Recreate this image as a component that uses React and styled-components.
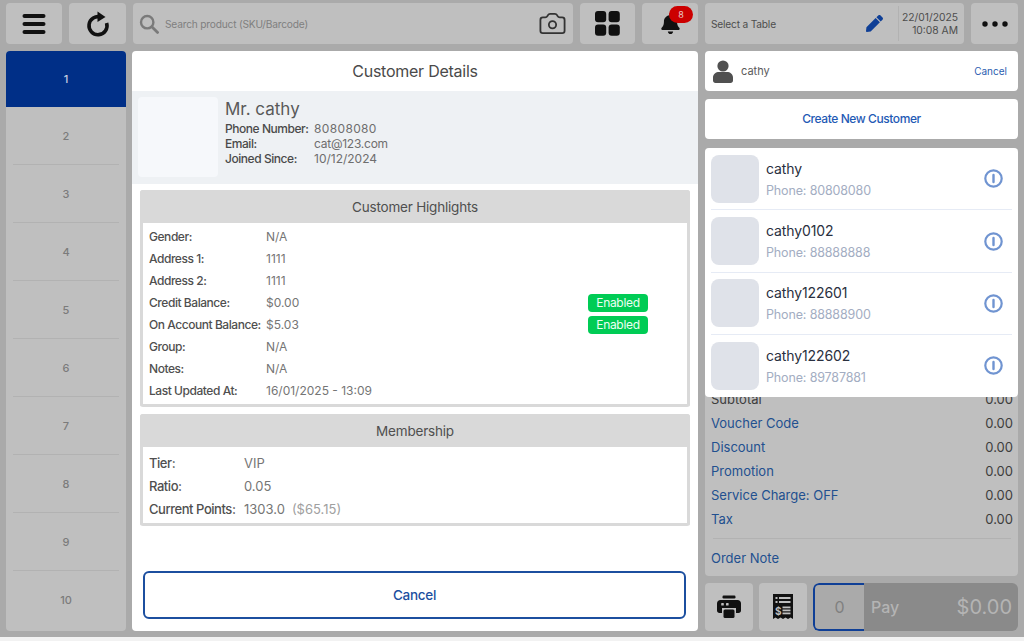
import React from 'react';
import styled, { createGlobalStyle } from 'styled-components';
import { Camera } from 'lucide-react';
import { FaBell, FaPen } from 'react-icons/fa';

const GlobalStyle = createGlobalStyle`
  html, body { margin: 0; padding: 0; height: 100%; overflow: hidden; }
  body { background: #f2f2f2; font-family: Inter, "Liberation Sans", sans-serif; }
  * { box-sizing: border-box; }
`;

const Page = styled.div`
  width: 1024px;
  height: 637px;
  background: #aaaaaa;
  padding: 3px 6px 6px;
  display: flex;
  flex-direction: column;
  gap: 7px;
`;

const TopBar = styled.div`
  display: flex;
  gap: 7px;
  height: 41px;
  flex: none;
`;

const TopButton = styled.div`
  width: ${(p) => p.$w}px;
  flex: none;
  background: #bfbfbf;
  border-radius: 4px;
  display: flex;
  align-items: center;
  justify-content: center;
  position: relative;
  color: #111;
`;

const SearchBar = styled.div`
  width: 440px;
  flex: none;
  background: #bfbfbf;
  border-radius: 4px;
  display: flex;
  align-items: center;
  padding: 0 6px 0 6px;
  gap: 6px;
`;

const SearchText = styled.div`
  flex: 1;
  font-size: 10.2px;
  letter-spacing: -0.2px;
  color: #808080;
`;

const Badge = styled.div`
  position: absolute;
  top: 3px;
  left: 27px;
  width: 24px;
  height: 17px;
  border-radius: 9px;
  background: #cc0000;
  color: #e8c9c9;
  font-size: 9px;
  display: flex;
  align-items: center;
  justify-content: center;
`;

const TablePicker = styled.div`
  width: 259px;
  flex: none;
  background: #bfbfbf;
  border-radius: 4px;
  display: flex;
  align-items: center;
  padding-left: 6px;
  color: #4d4d4d;
`;

const TableLabel = styled.div`
  flex: 1;
  font-size: 10.2px;
  letter-spacing: -0.2px;
`;

const EditIcon = styled(FaPen)`
  color: #0f3f96;
  font-size: 17px;
  margin-right: 15px;
`;

const DateBox = styled.div`
  height: 35px;
  width: 66px;
  padding-right: 6px;
  border-left: 1px solid #b2b2b2;
  text-align: right;
  font-size: 10.3px;
  line-height: 13px;
  display: flex;
  flex-direction: column;
  justify-content: center;
`;

const Body = styled.div`
  flex: 1;
  min-height: 0;
  display: flex;
  gap: 6px;
`;

const SideList = styled.div`
  width: 120px;
  flex: none;
  background: #bfbfbf;
  border-radius: 4px;
  overflow: hidden;
  display: flex;
  flex-direction: column;
`;

const SideItem = styled.div`
  height: ${(p) => (p.$active ? 56 : 58)}px;
  flex: none;
  display: flex;
  align-items: center;
  justify-content: center;
  font-size: 11px;
  font-weight: 500;
  color: ${(p) => (p.$active ? '#c3cfe0' : '#7b7b7b')};
  background: ${(p) => (p.$active ? '#002f87' : 'transparent')};
  position: relative;
  &::after {
    content: '';
    display: ${(p) => (p.$active || p.$last ? 'none' : 'block')};
    position: absolute;
    left: 7px;
    right: 7px;
    bottom: 0;
    height: 1px;
    background: #b2b2b2;
  }
`;

const Main = styled.div`
  width: 566px;
  flex: none;
  background: #fff;
  border-radius: 4px;
  display: flex;
  flex-direction: column;
  overflow: hidden;
  margin-right: 1px;
`;

const MainTitle = styled.div`
  height: 40px;
  flex: none;
  display: flex;
  align-items: center;
  justify-content: center;
  font-size: 16px;
  letter-spacing: -0.25px;
  color: #4a4a4a;
`;

const ProfileBand = styled.div`
  height: 93px;
  flex: none;
  background: #eef1f4;
  padding: 6px;
  display: flex;
  gap: 7px;
`;

const ProfilePhoto = styled.div`
  width: 80px;
  height: 80px;
  background: #f6f8fb;
  border-radius: 4px;
  flex: none;
`;

const ProfileInfo = styled.div`
  display: flex;
  flex-direction: column;
`;

const ProfileName = styled.div`
  font-size: 17px;
  line-height: 22px;
  color: #595959;
  margin-top: 1px;
  margin-bottom: 1px;
`;

const ProfileRow = styled.div`
  display: flex;
  height: 15px;
  align-items: center;
  font-size: 12px;
`;

const ProfileKey = styled.div`
  width: 89px;
  font-weight: 500;
  letter-spacing: -0.45px;
  color: #4a4a4a;
`;

const ProfileValue = styled.div`
  color: #6e6e6e;
  letter-spacing: ${(p) => p.$track || 0}px;
`;

const Sections = styled.div`
  flex: 1;
  padding: 6px 8px 0;
  display: flex;
  flex-direction: column;
  gap: 7px;
`;

const Section = styled.div`
  background: #fff;
  border: 3px solid #d9d9d9;
  border-top: 0;
  border-radius: 3px;
`;

const SectionHead = styled.div`
  height: 33px;
  margin: 0 -3px;
  background: #d9d9d9;
  border-radius: 3px 3px 0 0;
  display: flex;
  align-items: center;
  justify-content: center;
  font-size: 13.5px;
  letter-spacing: -0.2px;
  color: #4f4f4f;
`;

const SectionBody = styled.div`
  padding: ${(p) => p.$pad};
`;

const Row = styled.div`
  height: ${(p) => p.$h}px;
  display: flex;
  align-items: center;
  position: relative;
  font-size: ${(p) => p.$size}px;
`;

const Key = styled.div`
  width: ${(p) => p.$w}px;
  flex: none;
  font-weight: 500;
  letter-spacing: -0.45px;
  color: #4f4f4f;
`;

const Value = styled.div`
  color: #757575;
`;

const Muted = styled.span`
  color: #a0a0a0;
  margin-left: 7px;
`;

const EnabledTag = styled.div`
  position: absolute;
  right: 33px;
  top: 2px;
  width: 60px;
  height: 18px;
  background: #00cc55;
  border-radius: 4px;
  color: #ecfff3;
  font-size: 12px;
  letter-spacing: -0.3px;
  display: flex;
  align-items: center;
  justify-content: center;
`;

const CancelWrap = styled.div`
  padding: 0 12px 12px 11px;
  flex: none;
`;

const CancelButton = styled.div`
  height: 48px;
  border: 2px solid #1c4f9f;
  border-radius: 6px;
  display: flex;
  align-items: center;
  justify-content: center;
  color: #1c4f9f;
  font-size: 13.5px;
  font-weight: 500;
  letter-spacing: -0.3px;
`;

const RightCol = styled.div`
  width: 313px;
  flex: none;
  display: flex;
  flex-direction: column;
  gap: 8px;
`;

const WhiteCard = styled.div`
  height: 40px;
  flex: none;
  background: #fff;
  border-radius: 4px;
  display: flex;
  align-items: center;
  padding: 0 11px 0 8px;
  font-size: 11px;
  color: #5a5a5a;
`;

const CustomerName = styled.div`
  flex: 1;
  margin-left: 8px;
`;

const CancelLink = styled.div`
  color: #2a5db0;
  font-size: 10px;
`;

const CreateButton = styled(WhiteCard)`
  justify-content: center;
  padding: 0 0 2px;
  color: #1f5ab5;
  font-size: 12px;
  font-weight: 500;
  letter-spacing: -0.42px;
`;

const OrderArea = styled.div`
  flex: 1;
  min-height: 0;
  position: relative;
  display: flex;
  flex-direction: column;
  gap: 7px;
  margin-top: 1px;
`;

const Totals = styled.div`
  flex: 1;
  min-height: 0;
  background: #bfbfbf;
  border-radius: 4px;
  padding: 0 5px 6px 6px;
  display: flex;
  flex-direction: column;
  justify-content: flex-end;
`;

const TotalRow = styled.div`
  height: 24px;
  flex: none;
  display: flex;
  align-items: center;
  justify-content: space-between;
  font-size: 13px;
  color: ${(p) => (p.$link ? '#22508f' : '#3d3d3d')};
`;

const TotalAmount = styled.span`
  color: #3d3d3d;
`;

const TotalDivider = styled.div`
  height: 1px;
  background: #b2b2b2;
  margin: 7px 2px 7px 2px;
`;

const Dropdown = styled.div`
  position: absolute;
  top: 0;
  left: 0;
  right: 0;
  height: 249px;
  background: #fff;
  border-radius: 4px;
  padding: 0 6px;
`;

const CustomerRow = styled.div`
  height: 62.4px;
  display: flex;
  align-items: center;
  gap: 7px;
  border-bottom: 1px solid ${(p) => (p.$last ? 'transparent' : '#e6ebf5')};
`;

const Avatar = styled.div`
  width: 48px;
  height: 48px;
  flex: none;
  background: #dfe2e9;
  border-radius: 8px;
`;

const CustomerText = styled.div`
  flex: 1;
  display: flex;
  flex-direction: column;
  gap: 5px;
  padding-top: 1px;
`;

const CustomerTitle = styled.div`
  font-size: 14px;
  line-height: 18px;
  letter-spacing: -0.1px;
  color: #2a3040;
`;

const CustomerPhone = styled.div`
  font-size: 12.5px;
  line-height: 16px;
  letter-spacing: -0.15px;
  color: #a3adc2;
`;

const InfoWrap = styled.div`
  margin-right: 9px;
  display: flex;
`;

const Footer = styled.div`
  height: 48px;
  flex: none;
  display: flex;
  gap: 6px;
`;

const FooterIcon = styled.div`
  width: 48px;
  background: #bfbfbf;
  border-radius: 4px;
  display: flex;
  align-items: center;
  justify-content: center;
  color: #111;
`;

const PayGroup = styled.div`
  flex: 1;
  display: flex;
  border-radius: 6px;
  overflow: hidden;
`;

const QtyBox = styled.div`
  width: 51px;
  flex: none;
  border: 2px solid #0f3f96;
  border-right: 0;
  border-radius: 6px 0 0 6px;
  display: flex;
  align-items: center;
  justify-content: center;
  font-size: 16px;
  color: #808080;
`;

const PayButton = styled.div`
  flex: 1;
  background: #8a8a8a;
  display: flex;
  align-items: center;
  justify-content: space-between;
  padding: 0 6px 0 7px;
  color: #b4b4b4;
`;

const PayLabel = styled.span`
  font-size: 16px;
  font-weight: 500;
`;

const PayAmount = styled.span`
  font-size: 20px;
`;

const MenuIcon = () => (
  <svg width="24" height="22" viewBox="0 0 24 22">
    <rect x="0.5" y="1" width="23" height="4" rx="2" fill="#111" />
    <rect x="0.5" y="9" width="23" height="4" rx="2" fill="#111" />
    <rect x="0.5" y="17" width="23" height="4" rx="2" fill="#111" />
  </svg>
);

const RefreshIcon = () => (
  <svg width="24" height="26" viewBox="0 0 24 26">
    <path d="M15 6.2A9 9 0 1 0 20.6 12" fill="none" stroke="#111" strokeWidth="3.6" />
    <path d="M11.5 0.5 L19.5 6 L11.5 11 Z" fill="#111" />
  </svg>
);

const SearchIcon = () => (
  <svg width="20" height="20" viewBox="0 0 20 20">
    <circle cx="8.2" cy="8.2" r="6.2" fill="none" stroke="#7a7a7a" strokeWidth="2.4" />
    <path d="M12.8 12.8 L18.6 18.4" stroke="#7a7a7a" strokeWidth="2.8" strokeLinecap="round" />
  </svg>
);

const GridIcon = () => (
  <svg width="25" height="25" viewBox="0 0 25 25">
    <rect x="0" y="0" width="11.2" height="11.2" rx="3" fill="#111" />
    <rect x="13.6" y="0" width="11.2" height="11.2" rx="3" fill="#111" />
    <rect x="0" y="13.6" width="11.2" height="11.2" rx="3" fill="#111" />
    <rect x="13.6" y="13.6" width="11.2" height="11.2" rx="3" fill="#111" />
  </svg>
);

const DotsIcon = () => (
  <svg width="26" height="6" viewBox="0 0 26 6">
    <circle cx="3" cy="3" r="2.7" fill="#111" />
    <circle cx="13" cy="3" r="2.7" fill="#111" />
    <circle cx="23" cy="3" r="2.7" fill="#111" />
  </svg>
);

const PersonIcon = () => (
  <svg width="20" height="23" viewBox="0 0 20 23">
    <circle cx="10" cy="6" r="5.6" fill="#505050" />
    <path d="M0 22V17.5C0 14 3 12 6 12H14C17 12 20 14 20 17.5V20.5C20 22 19 23 17.5 23H2.5C1 23 0 22 0 20.5Z" fill="#505050" />
  </svg>
);

const InfoIcon = () => (
  <svg width="19" height="19" viewBox="0 0 19 19">
    <circle cx="9.5" cy="9.5" r="8.2" fill="none" stroke="#7094d1" strokeWidth="2.2" />
    <rect x="8.3" y="4.8" width="2.4" height="9.4" rx="1.2" fill="#7094d1" />
  </svg>
);

const PrinterIcon = () => (
  <svg width="24" height="24" viewBox="0 0 24 24">
    <rect x="5.5" y="0.5" width="13" height="3" rx="1.2" fill="#111" />
    <path d="M3.5 5H20.5C22.5 5 24 6.5 24 8.5V15.5C24 17 23 18 21.5 18H19V13H5V18H2.5C1 18 0 17 0 15.5V8.5C0 6.5 1.5 5 3.5 5Z" fill="#111" />
    <rect x="6.5" y="14.5" width="11" height="8.5" rx="1.5" fill="#111" />
    <rect x="4.2" y="8" width="2.6" height="2.6" rx="0.6" fill="#bfbfbf" />
    <rect x="9" y="8" width="2.6" height="2.6" rx="0.6" fill="#bfbfbf" />
  </svg>
);

const ReceiptIcon = () => (
  <svg width="20" height="26" viewBox="0 0 20 26">
    <path d="M0 0H20V25L17.5 23.4L15 25L12.5 23.4L10 25L7.5 23.4L5 25L2.5 23.4L0 25Z" fill="#111" />
    <rect x="2.5" y="3" width="2" height="2" fill="#bfbfbf" />
    <rect x="6" y="3" width="11.5" height="2" fill="#bfbfbf" />
    <rect x="2.5" y="7" width="2" height="2" fill="#bfbfbf" />
    <rect x="6" y="7" width="11.5" height="2" fill="#bfbfbf" />
    <text x="2" y="20.5" fontSize="10" fontWeight="700" fill="#bfbfbf" fontFamily="Inter, sans-serif">$</text>
    <rect x="9.5" y="12.5" width="8" height="1.8" fill="#bfbfbf" />
    <rect x="9.5" y="15.5" width="8" height="1.8" fill="#bfbfbf" />
    <rect x="9.5" y="18.5" width="8" height="1.8" fill="#bfbfbf" />
  </svg>
);

const sideNumbers = [1, 2, 3, 4, 5, 6, 7, 8, 9, 10];

const highlights = [
  ['Gender:', 'N/A'],
  ['Address 1:', '1111'],
  ['Address 2:', '1111'],
  ['Credit Balance:', '$0.00', true],
  ['On Account Balance:', '$5.03', true],
  ['Group:', 'N/A'],
  ['Notes:', 'N/A'],
  ['Last Updated At:', '16/01/2025 - 13:09'],
];

const customers = [
  ['cathy', '80808080'],
  ['cathy0102', '88888888'],
  ['cathy122601', '88888900'],
  ['cathy122602', '89787881'],
];

const totals = [
  ['Subtotal', false],
  ['Voucher Code', true],
  ['Discount', true],
  ['Promotion', true],
  ['Service Charge: OFF', true],
  ['Tax', true],
];

export default function App() {
  return (
    <Page>
      <GlobalStyle />
      <TopBar>
        <TopButton $w={56}><MenuIcon /></TopButton>
        <TopButton $w={57}><RefreshIcon /></TopButton>
        <SearchBar>
          <SearchIcon />
          <SearchText>Search product (SKU/Barcode)</SearchText>
          <Camera size={29} strokeWidth={1.5} color="#333" />
        </SearchBar>
        <TopButton $w={55}><GridIcon /></TopButton>
        <TopButton $w={56}>
          <FaBell size={21} />
          <Badge>8</Badge>
        </TopButton>
        <TablePicker>
          <TableLabel>Select a Table</TableLabel>
          <EditIcon />
          <DateBox>
            <div>22/01/2025</div>
            <div>10:08 AM</div>
          </DateBox>
        </TablePicker>
        <TopButton $w={47}><DotsIcon /></TopButton>
      </TopBar>
      <Body>
        <SideList>
          {sideNumbers.map((n) => (
            <SideItem key={n} $active={n === 1} $last={n === 10}>{n}</SideItem>
          ))}
        </SideList>
        <Main>
          <MainTitle>Customer Details</MainTitle>
          <ProfileBand>
            <ProfilePhoto />
            <ProfileInfo>
              <ProfileName>Mr. cathy</ProfileName>
              <ProfileRow><ProfileKey>Phone Number:</ProfileKey><ProfileValue $track={0.35}>80808080</ProfileValue></ProfileRow>
              <ProfileRow><ProfileKey>Email:</ProfileKey><ProfileValue $track={-0.25}>cat@123.com</ProfileValue></ProfileRow>
              <ProfileRow><ProfileKey>Joined Since:</ProfileKey><ProfileValue>10/12/2024</ProfileValue></ProfileRow>
            </ProfileInfo>
          </ProfileBand>
          <Sections>
            <Section>
              <SectionHead>Customer Highlights</SectionHead>
              <SectionBody $pad="3px 6px 3px">
                {highlights.map(([k, v, on]) => (
                  <Row key={k} $h={21.9} $size={12}>
                    <Key $w={117}>{k}</Key>
                    <Value>{v}</Value>
                    {on && <EnabledTag>Enabled</EnabledTag>}
                  </Row>
                ))}
              </SectionBody>
            </Section>
            <Section>
              <SectionHead>Membership</SectionHead>
              <SectionBody $pad="4px 6px 3px">
                <Row $h={23} $size={13}><Key $w={95}>Tier:</Key><Value>VIP</Value></Row>
                <Row $h={23} $size={13}><Key $w={95}>Ratio:</Key><Value>0.05</Value></Row>
                <Row $h={23} $size={13}>
                  <Key $w={95}>Current Points:</Key>
                  <Value>1303.0<Muted>($65.15)</Muted></Value>
                </Row>
              </SectionBody>
            </Section>
          </Sections>
          <CancelWrap>
            <CancelButton>Cancel</CancelButton>
          </CancelWrap>
        </Main>
        <RightCol>
          <WhiteCard>
            <PersonIcon />
            <CustomerName>cathy</CustomerName>
            <CancelLink>Cancel</CancelLink>
          </WhiteCard>
          <CreateButton>Create New Customer</CreateButton>
          <OrderArea>
            <Totals>
              {totals.map(([label, link]) => (
                <TotalRow key={label} $link={link}>
                  {label}
                  <TotalAmount>0.00</TotalAmount>
                </TotalRow>
              ))}
              <TotalDivider />
              <TotalRow $link>Order Note</TotalRow>
            </Totals>
            <Footer>
              <FooterIcon><PrinterIcon /></FooterIcon>
              <FooterIcon><ReceiptIcon /></FooterIcon>
              <PayGroup>
                <QtyBox>0</QtyBox>
                <PayButton>
                  <PayLabel>Pay</PayLabel>
                  <PayAmount>$0.00</PayAmount>
                </PayButton>
              </PayGroup>
            </Footer>
            <Dropdown>
              {customers.map(([name, phone], i) => (
                <CustomerRow key={name} $last={i === customers.length - 1}>
                  <Avatar />
                  <CustomerText>
                    <CustomerTitle>{name}</CustomerTitle>
                    <CustomerPhone>Phone: {phone}</CustomerPhone>
                  </CustomerText>
                  <InfoWrap><InfoIcon /></InfoWrap>
                </CustomerRow>
              ))}
            </Dropdown>
          </OrderArea>
        </RightCol>
      </Body>
    </Page>
  );
}
